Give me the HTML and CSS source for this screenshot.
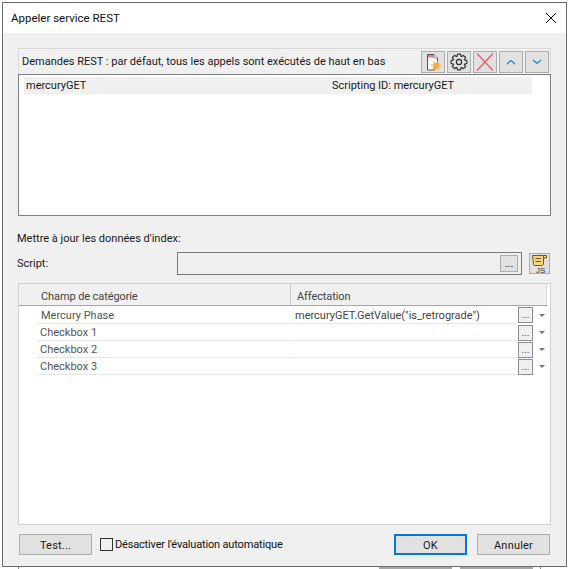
FILE: index.html
```html
<!DOCTYPE html>
<html lang="fr">
<head>
<meta charset="utf-8">
<title>Appeler service REST</title>
<link rel="stylesheet" href="styles.css">
</head>
<body>
<div class="window">
  <div class="titlebar">
    <span class="title">Appeler service REST</span>
    <svg class="close" width="12" height="12" viewBox="0 0 12 12"><path d="M1 1l10 10M11 1L1 11" stroke="#111" stroke-width="1" fill="none"/></svg>
  </div>
  <div class="content">
    <div class="rest-head">
      <span class="rest-label">Demandes REST : par défaut, tous les appels sont exécutés de haut en bas</span>
      <div class="tools">
        <button class="tool"><svg width="18" height="20" viewBox="0 0 18 20"><path d="M3.500 2.500h6.500l3.500 3.500v6h-3v6h-7z" fill="#fff" stroke="#555"/><path d="M4 3h6v2.500H4z" fill="#ef7a82"/><path d="M10 2.500v3.500h3.500" fill="#fff" stroke="#888"/><circle cx="12" cy="14" r="3" fill="#f9a93a"/><circle cx="12" cy="14" r="4.200" fill="none" stroke="#f9b95e" stroke-width="1.400" stroke-dasharray="1.600 1.700"/></svg></button>
        <button class="tool"><svg width="18" height="18" viewBox="0 0 18 18"><polygon points="14.64,6.95 16.85,7.47 16.85,10.53 14.64,11.05 14.44,11.54 15.63,13.47 13.47,15.63 11.54,14.44 11.05,14.64 10.53,16.85 7.47,16.85 6.95,14.64 6.46,14.44 4.53,15.63 2.37,13.47 3.56,11.54 3.36,11.05 1.15,10.53 1.15,7.47 3.36,6.95 3.56,6.46 2.37,4.53 4.53,2.37 6.46,3.56 6.95,3.36 7.47,1.15 10.53,1.15 11.05,3.36 11.54,3.56 13.47,2.37 15.63,4.53 14.44,6.46" fill="none" stroke="#333" stroke-width="1.200" stroke-linejoin="round"/><circle cx="9" cy="9" r="2.600" fill="none" stroke="#333" stroke-width="1.200"/></svg></button>
        <button class="tool"><svg width="22" height="20" viewBox="0 0 22 20"><path d="M3 1.500l16 17M19 1.500l-16 17" stroke="#e8545a" stroke-width="1.100" fill="none"/></svg></button>
        <button class="tool"><svg width="10" height="6" viewBox="0 0 10 6"><path d="M1 5l4-3.500L9 5" stroke="#2f86c9" stroke-width="1.300" fill="none"/></svg></button>
        <button class="tool"><svg width="10" height="6" viewBox="0 0 10 6"><path d="M1 1l4 3.500L9 1" stroke="#2f86c9" stroke-width="1.300" fill="none"/></svg></button>
      </div>
    </div>
    <div class="rest-list">
      <div class="rest-row"><span class="rest-name">mercuryGET</span><span class="rest-id">Scripting ID: mercuryGET</span></div>
    </div>
    <div class="section-label">Mettre à jour les données d'index:</div>
    <div class="script-row">
      <span class="script-label">Script:</span>
      <div class="script-input"><button class="dots">...</button></div>
      <button class="js-btn"><svg width="17" height="20" viewBox="0 0 17 20"><path d="M1.500 1.500h11v8.500c0 1-1 1.500-2 1.500H4c-1.500 0-1.500-1-1.500-1.500z" fill="#fbd679" stroke="#6b5a30"/><path d="M12.500 1.500h3v2.500h-3z" fill="#fbd679" stroke="#6b5a30"/><path d="M4.500 4.500h5.500M4.500 7.500h5.500" stroke="#6b5a30"/><text x="5" y="19" class="js-text">JS</text></svg></button>
    </div>
    <div class="grid">
      <div class="grid-head">
        <div class="head-a">Champ de catégorie</div>
        <div class="head-b">Affectation</div>
      </div>
      <div class="grid-row first"><div class="cell-a">Mercury Phase</div><div class="cell-b">mercuryGET.GetValue("is_retrograde")</div><button class="cell-btn">...</button><span class="arrow"></span></div>
      <div class="grid-row"><div class="cell-a">Checkbox 1</div><div class="cell-b"></div><button class="cell-btn">...</button><span class="arrow"></span></div>
      <div class="grid-row"><div class="cell-a">Checkbox 2</div><div class="cell-b"></div><button class="cell-btn">...</button><span class="arrow"></span></div>
      <div class="grid-row"><div class="cell-a">Checkbox 3</div><div class="cell-b"></div><button class="cell-btn">...</button><span class="arrow"></span></div>
    </div>
    <div class="footer">
      <button class="btn">Test...</button>
      <label class="check"><span class="box"></span><span class="check-text">Désactiver l'évaluation automatique</span></label>
      <button class="btn ok">OK</button>
      <button class="btn cancel">Annuler</button>
    </div>
  </div>
</div>
<div class="under">
  <div class="under-a"></div>
  <div class="under-b"></div>
  <div class="under-b second"></div>
  <div class="under-c"></div>
</div>
</body>
</html>
```
FILE: styles.css
```css
* { box-sizing: border-box; }
html, body { margin: 0; padding: 0; background: #fff; height: 569px; overflow: hidden; }
body { font-family: Roboto, "Noto Sans", sans-serif; font-size: 11px; color: #1a1a1a; padding: 2px 2px 0; }
button { font: inherit; color: inherit; padding: 0; }
.window { width: 565px; height: 565px; border: 1px solid #6d6d6d; background: #f0f0f0; display: flex; flex-direction: column; }
.titlebar { height: 30px; background: #fff; display: flex; align-items: center; justify-content: space-between; padding: 0 9px 0 8px; flex: none; }
.title { font-size: 11.5px; color: #111; }
.content { padding: 15px 15px 0; flex: 1; display: flex; flex-direction: column; }
.rest-head { height: 26px; border: 1px solid #d9d9d9; border-bottom: 0; background: #f0f0f0; display: flex; align-items: center; justify-content: space-between; padding: 0 1px 0 3px; }
.rest-label { color: #1a1a1a; }
.tools { display: flex; gap: 2px; }
.tool { width: 24px; height: 22px; background: #e1e1e1; border: 1px solid #adadad; display: flex; align-items: center; justify-content: center; }
.rest-list { height: 142px; border: 1px solid #7f7f86; background: #fff; padding: 2px 18px 0 5px; }
.rest-row { height: 17px; background: #f0f0f0; display: flex; align-items: center; padding-left: 2px; }
.rest-name { width: 306px; }
.section-label { margin-top: 14px; height: 17px; line-height: 17px; margin-left: -1px; }
.script-row { display: flex; align-items: center; margin-top: 5px; height: 23px; }
.script-label { width: 160px; margin-left: -1px; flex: none; }
.script-input { width: 345px; height: 23px; border: 1px solid #7a7a7a; background: #f0f0f0; display: flex; align-items: center; justify-content: flex-end; padding-right: 3px; }
.dots { width: 18px; height: 17px; background: #e1e1e1; border: 1px solid #adadad; line-height: 10px; font-size: 11px; }
.js-btn { width: 21px; height: 21px; margin-left: 7px; background: #e1e1e1; border: 1px solid #adadad; display: flex; align-items: center; justify-content: center; }
.js-text { font: 8px "Liberation Sans", sans-serif; fill: #333; }
.grid { margin-top: 8px; height: 242px; border: 1px solid #d0d0d0; background: #fff; }
.grid-head { height: 22px; background: #f0f0f0; border-bottom: 1px solid #a6a6a6; display: flex; margin-right: 3px; color: #444; line-height: 25px; letter-spacing: -.1px; }
.head-a { width: 272px; padding-left: 22px; border-right: 1px solid #c9c9c9; }
.head-b { padding-left: 6px; flex: 1; border-right: 1px solid #dcdcdc; }
.grid-row { height: 17px; margin-left: 18px; margin-right: 3px; display: flex; align-items: center; color: #555; }
.grid-row.first { height: 18px; }
.cell-a { width: 254px; padding-left: 3px; height: 100%; line-height: 18px; border-bottom: 1px solid #e6e6e6; }
.first .cell-a { padding-left: 4px; line-height: 20px; }
.cell-b { width: 226px; margin-left: 1px; padding-left: 3px; height: 100%; line-height: 18px; color: #444; white-space: nowrap; border-bottom: 1px solid #e6e6e6; }
.first .cell-b { line-height: 20px; }
.cell-btn { width: 15px; height: 16px; flex: none; background: #f0f0f0; border: 1px solid #8e8e8e; line-height: 14px; font-size: 10px; }
.arrow { margin-left: 6px; width: 0; height: 0; border: 3px solid transparent; border-top: 3px solid #777; border-bottom: 0; }
.footer { display: flex; align-items: center; margin-top: 9px; height: 21px; }
.btn { width: 73px; height: 21px; background: #e1e1e1; border: 1px solid #adadad; margin-left: 1px; padding-top: 1px; letter-spacing: .2px; }
.check { display: flex; align-items: center; margin-left: 8px; color: #111; }
.check-text { letter-spacing: -.17px; }
.box { width: 13px; height: 13px; border: 1px solid #333; background: #f0f0f0; margin-right: 2px; }
.ok { margin-left: auto; border: 2px solid #0078d7; }
.cancel { margin-left: 10px; margin-right: 1px; }
.under { display: flex; height: 2px; }
.under-a { width: 16px; margin-left: 16px; border-left: 1px solid #8a8a8a; }
.under-b { width: 73px; margin-left: 345px; background: #a8a8a8; }
.under-b.second { margin-left: 8px; }
.under-c { width: 1px; margin-left: 7px; background: #8a8a8a; }
```
